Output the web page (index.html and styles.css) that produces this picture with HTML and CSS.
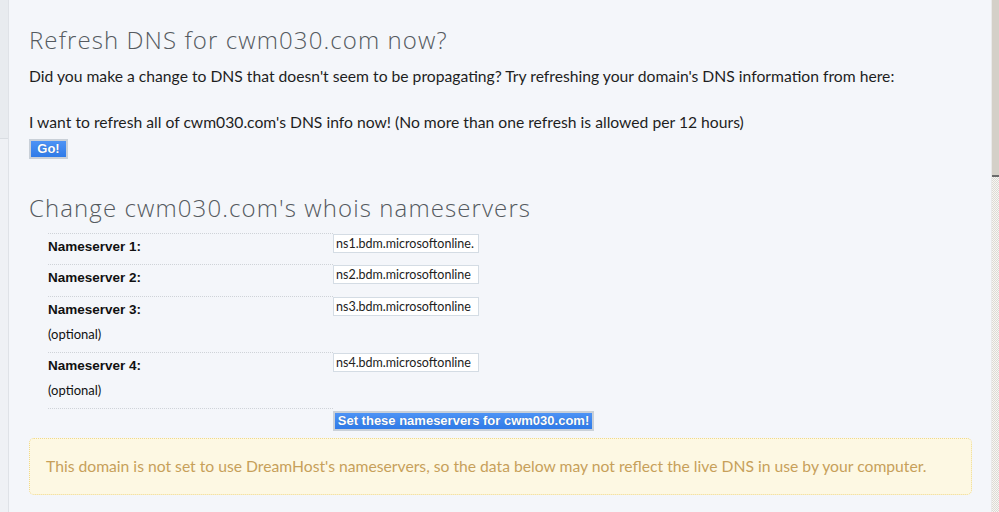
FILE: index.html
```html
<!DOCTYPE html>
<html>
<head>
<meta charset="utf-8">
<link rel="stylesheet" href="styles.css">
</head>
<body>
<div class="page">
  <div class="gutter"><div class="gutter-top"></div></div>
  <div class="main">
    <h2 class="title">Refresh DNS for cwm030.com now?</h2>
    <p class="text">Did you make a change to DNS that doesn't seem to be propagating? Try refreshing your domain's DNS information from here:</p>
    <p class="text refresh-line">I want to refresh all of cwm030.com's DNS info now! (No more than one refresh is allowed per 12 hours)</p>
    <button class="btn btn-go">Go!</button>

    <h2 class="title title-ns">Change cwm030.com's whois nameservers</h2>
    <div class="ns-table">
      <div class="ns-row">
        <div class="ns-label"><b>Nameserver 1:</b></div>
        <div class="ns-field"><span class="ns-input">ns1.bdm.microsoftonline.</span></div>
      </div>
      <div class="ns-row">
        <div class="ns-label"><b>Nameserver 2:</b></div>
        <div class="ns-field"><span class="ns-input">ns2.bdm.microsoftonline</span></div>
      </div>
      <div class="ns-row ns-row-tall">
        <div class="ns-label"><b>Nameserver 3:</b><span class="opt">(optional)</span></div>
        <div class="ns-field"><span class="ns-input">ns3.bdm.microsoftonline</span></div>
      </div>
      <div class="ns-row ns-row-tall">
        <div class="ns-label"><b>Nameserver 4:</b><span class="opt">(optional)</span></div>
        <div class="ns-field"><span class="ns-input">ns4.bdm.microsoftonline</span></div>
      </div>
      <div class="ns-row ns-row-submit">
        <div class="ns-label"></div>
        <div class="ns-field"><button class="btn btn-set">Set these nameservers for cwm030.com!</button></div>
      </div>
    </div>

    <div class="notice">This domain is not set to use DreamHost's nameservers, so the data below may not reflect the live DNS in use by your computer.</div>
  </div>
  <div class="scrollbar"><div class="thumb"></div><div class="track"></div></div>
</div>
</body>
</html>
```
FILE: styles.css
```css
html, body {
  margin: 0;
  padding: 0;
  background: #f4f6fa;
}
.page {
  display: flex;
  width: 999px;
  height: 512px;
  overflow: hidden;
  font-family: "Lato", "Liberation Sans", sans-serif;
  color: #1e1e1e;
}
.gutter {
  width: 8px;
  flex: none;
  background: #eff1f5;
  border-right: 1px solid #dfe2e7;
}
.gutter-top {
  height: 138px;
  background: #e8ebef;
  border-bottom: 1px solid #d9dde2;
}
.main {
  flex: 1;
  padding: 0 20px 0 20px;
  min-width: 0;
}
.title {
  margin: 24px 0 0 0;
  font-family: "Open Sans", sans-serif;
  font-weight: 300;
  font-size: 24px;
  line-height: 32px;
  letter-spacing: 1.1px;
  color: #555a60;
}
.text {
  margin: 0;
  font-size: 15.7px;
  line-height: 20px;
}
.title + .text {
  margin-top: 10px;
}
.refresh-line {
  margin-top: 26px;
}
.btn {
  display: block;
  font-family: "Liberation Sans", sans-serif;
  font-weight: bold;
  font-size: 13px;
  color: #fff;
  background: linear-gradient(#4d93f5, #2f7be8);
  border: 2px solid #c9d0d8;
  padding: 0;
  text-shadow: 0 0 1px rgba(0,0,0,0.3);
}
.btn-go {
  margin-top: 7px;
  width: 39px;
  height: 20px;
  line-height: 16px;
}
.title-ns {
  margin-top: 33px;
}
.ns-table {
  margin: 9px 0 0 19px;
}
.ns-row {
  display: flex;
  height: 31px;
}
.ns-row + .ns-row { height: 32px; }
.ns-row.ns-row-tall { height: 56px; }
.ns-row.ns-row-submit { height: 24px; }
.ns-label {
  width: 285px;
  flex: none;
  border-top: 1px dotted #cfd3d8;
  font-size: 13px;
  display: flex;
  flex-direction: column;
  padding-top: 5px;
  box-sizing: border-box;
  color: #111;
}
.ns-label b {
  line-height: 16px;
  font-family: "Liberation Sans", sans-serif;
  font-size: 13.5px;
  font-weight: bold;
}
.opt {
  margin-top: 8px;
  line-height: 16px;
}
.ns-field {
  flex: none;
}
.ns-input {
  display: block;
  width: 140px;
  height: 17px;
  margin-top: 1px;
  border: 1px solid #d4dce4;
  background: #fff;
  font-size: 12.5px;
  line-height: 17px;
  padding: 0 2px;
  white-space: nowrap;
  overflow: hidden;
  color: #222;
}
.btn-set {
  margin-top: 3px;
  width: 261px;
  height: 20px;
  line-height: 16px;
}
.notice {
  margin-top: 6px;
  box-sizing: border-box;
  width: 943px;
  height: 57px;
  padding: 17px 16px;
  background: #fdf8e3;
  border: 1px dotted #f0d98a;
  border-radius: 5px;
  color: #c7a05a;
  font-size: 15.7px;
  line-height: 20px;
}
.scrollbar {
  width: 7px;
  flex: none;
  border-left: 1px solid #e9e9e9;
  display: flex;
  flex-direction: column;
}
.thumb {
  height: 175px;
  background: #d4d0c8;
  border-bottom: 2px solid #6b6b6b;
}
.track {
  flex: 1;
  background-color: #f2f1ee;
  background-image: repeating-conic-gradient(#dcdad4 0 25%, #f7f6f3 0 50%);
  background-size: 2px 2px;
}
```
